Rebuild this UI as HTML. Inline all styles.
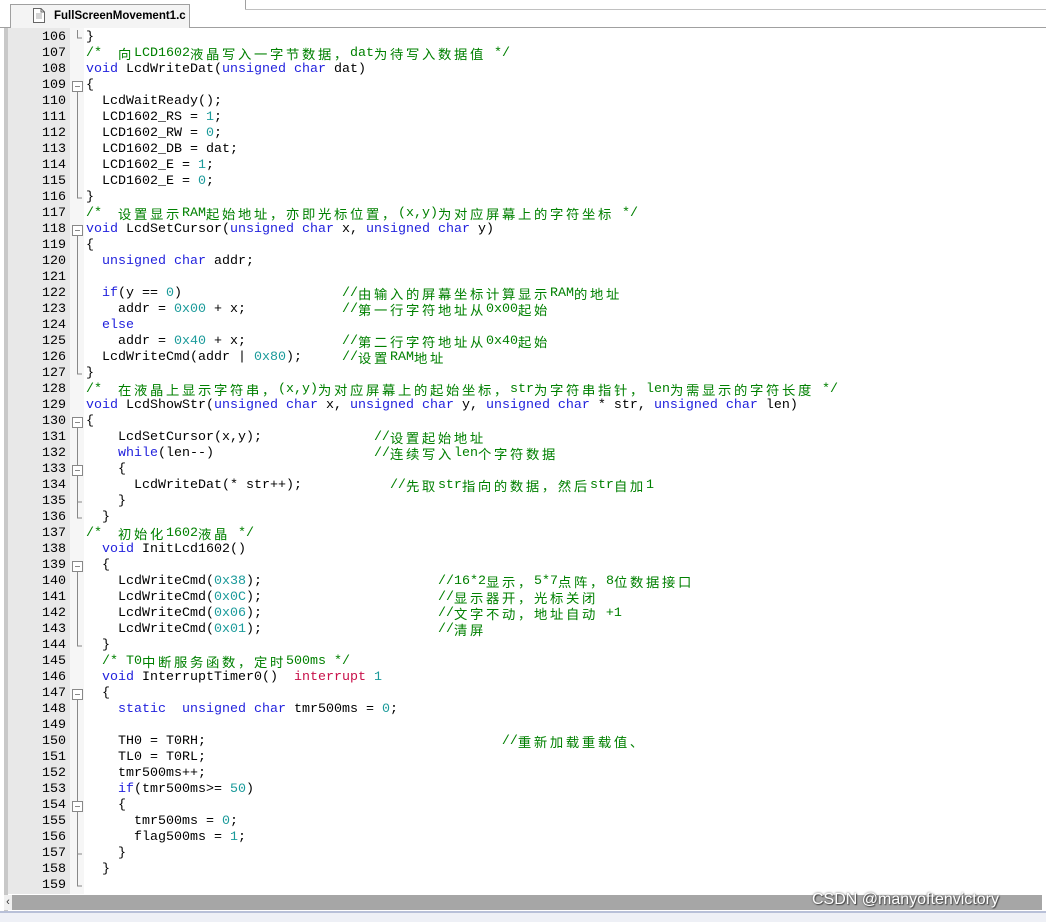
<!DOCTYPE html>
<html><head><meta charset="utf-8"><style>
body{margin:0;width:1046px;height:920px;background:#fff;position:relative;overflow:hidden;font-family:"Liberation Mono","Noto Sans CJK SC",monospace}
#top{position:absolute;left:0;top:0;width:1046px;height:27px;background:#fff;border-bottom:1px solid #a0a0a0}
#tab{position:absolute;left:10px;top:4px;width:178px;height:23px;background:#f4f4f4;border:1px solid #a0a0a0;border-bottom:none;font:bold 11.5px "Liberation Sans",sans-serif;white-space:nowrap;overflow:hidden}
#tab span{position:absolute;left:43px;top:5px}
#frame{position:absolute;left:4px;top:28px;width:1042px;height:886px;border-left:4px solid #c8c8c8;box-sizing:border-box}
#gut{position:absolute;left:8px;top:28px;width:62px;height:866px;background:#e8e8e8}
#fold{position:absolute;left:70px;top:28px;width:14px;height:866px;background:#f6f6f6}
#nums{position:absolute;left:8px;top:30px;width:58px;text-align:right;font-size:13.33px;line-height:16px;color:#000;white-space:pre}
#code{position:absolute;left:86px;top:30px;font-size:13.33px;line-height:16px;color:#000;white-space:pre}
#code div{height:16px;overflow:visible}
.k{color:#2222dd}.n{color:#1a9a9a}.m{color:#008000}.r{color:#c8104a}
i{font-style:normal;letter-spacing:2.67px;font-family:"Noto Sans CJK SC",sans-serif;display:inline-block;height:16px;line-height:16px;vertical-align:top;overflow:visible}
#sb{position:absolute;left:12px;top:895px;width:1030px;height:15px;background:#a6a6a6}
#sbl{position:absolute;left:4px;top:895px;width:8px;height:15px;background:#f0f0f0;font:11px sans-serif;color:#333;text-align:center;line-height:15px}
#bot{position:absolute;left:0;top:911px;width:1046px;height:9px;background:#eef0f6;border-top:2px solid #b8c0d8}
#wm{position:absolute;left:812px;top:891px;font:16px "Liberation Sans",sans-serif;color:#fff;text-shadow:0 0 2px #555,1px 1px 1px #444}
</style></head><body>
<div id="top"><div style="position:absolute;left:245px;top:0;width:1px;height:10px;background:#a0a0a0"></div><div style="position:absolute;left:245px;top:9px;width:801px;height:1px;background:#c0c0c0"></div></div>
<div id="tab"><svg style="position:absolute;left:22px;top:3px" width="12" height="15"><path d="M0.5 0.5H8L11.5 4V14.5H0.5Z" fill="#fff" stroke="#666"/><path d="M8 0.5V4H11.5" fill="none" stroke="#666"/><path d="M3 6h6M3 8h6M3 10h6" stroke="#aaa"/></svg><span>FullScreenMovement1.c</span></div>
<div id="frame"></div>
<div id="gut"></div><div id="fold"></div>
<svg style="position:absolute;left:70px;top:30px" width="14" height="864">
<g stroke="#888" fill="none" stroke-width="1">
<path d="M7.5 0V8H12"/>
<rect x="2.5" y="51.5" width="10" height="10" fill="#fff"/><path d="M5 56.5h5"/><path d="M7.5 62V168H12"/>
<rect x="2.5" y="195.5" width="10" height="10" fill="#fff"/><path d="M5 200.5h5"/><path d="M7.5 206V344H12"/>
<rect x="2.5" y="387.5" width="10" height="10" fill="#fff"/><path d="M5 392.5h5"/><path d="M7.5 398V488H12"/>
<rect x="2.5" y="435.5" width="10" height="10" fill="#fff"/><path d="M5 440.5h5"/><path d="M7.5 472H12"/>
<rect x="2.5" y="531.5" width="10" height="10" fill="#fff"/><path d="M5 536.5h5"/><path d="M7.5 542V616H12"/>
<rect x="2.5" y="659.5" width="10" height="10" fill="#fff"/><path d="M5 664.5h5"/><path d="M7.5 670V856H12"/>
<rect x="2.5" y="771.5" width="10" height="10" fill="#fff"/><path d="M5 776.5h5"/><path d="M7.5 824H12"/>
</g></svg>
<div id="nums">106
107
108
109
110
111
112
113
114
115
116
117
118
119
120
121
122
123
124
125
126
127
128
129
130
131
132
133
134
135
136
137
138
139
140
141
142
143
144
145
146
147
148
149
150
151
152
153
154
155
156
157
158
159</div>
<div id="code"><div>}</div><div><span class="m">/*  <i>向</i>LCD1602<i>液晶写入一字节数据，</i>dat<i>为待写入数据值</i> */</span></div><div><span class="k">void</span> LcdWriteDat(<span class="k">unsigned char</span> dat)</div><div>{</div><div>  LcdWaitReady();</div><div>  LCD1602_RS = <span class="n">1</span>;</div><div>  LCD1602_RW = <span class="n">0</span>;</div><div>  LCD1602_DB = dat;</div><div>  LCD1602_E = <span class="n">1</span>;</div><div>  LCD1602_E = <span class="n">0</span>;</div><div>}</div><div><span class="m">/*  <i>设置显示</i>RAM<i>起始地址，亦即光标位置，</i>(x,y)<i>为对应屏幕上的字符坐标</i> */</span></div><div><span class="k">void</span> LcdSetCursor(<span class="k">unsigned char</span> x, <span class="k">unsigned char</span> y)</div><div>{</div><div>  <span class="k">unsigned char</span> addr;</div><div> </div><div>  <span class="k">if</span>(y == <span class="n">0</span>)                    <span class="m">//<i>由输入的屏幕坐标计算显示</i>RAM<i>的地址</i></span></div><div>    addr = <span class="n">0x00</span> + x;            <span class="m">//<i>第一行字符地址从</i>0x00<i>起始</i></span></div><div>  <span class="k">else</span></div><div>    addr = <span class="n">0x40</span> + x;            <span class="m">//<i>第二行字符地址从</i>0x40<i>起始</i></span></div><div>  LcdWriteCmd(addr | <span class="n">0x80</span>);     <span class="m">//<i>设置</i>RAM<i>地址</i></span></div><div>}</div><div><span class="m">/*  <i>在液晶上显示字符串，</i>(x,y)<i>为对应屏幕上的起始坐标，</i>str<i>为字符串指针，</i>len<i>为需显示的字符长度</i> */</span></div><div><span class="k">void</span> LcdShowStr(<span class="k">unsigned char</span> x, <span class="k">unsigned char</span> y, <span class="k">unsigned char</span> * str, <span class="k">unsigned char</span> len)</div><div>{</div><div>    LcdSetCursor(x,y);              <span class="m">//<i>设置起始地址</i></span></div><div>    <span class="k">while</span>(len--)                    <span class="m">//<i>连续写入</i>len<i>个字符数据</i></span></div><div>    {</div><div>      LcdWriteDat(* str++);           <span class="m">//<i>先取</i>str<i>指向的数据，然后</i>str<i>自加</i>1</span></div><div>    }</div><div>  }</div><div><span class="m">/*  <i>初始化</i>1602<i>液晶</i> */</span></div><div>  <span class="k">void</span> InitLcd1602()</div><div>  {</div><div>    LcdWriteCmd(<span class="n">0x38</span>);                      <span class="m">//16*2<i>显示，</i>5*7<i>点阵，</i>8<i>位数据接口</i></span></div><div>    LcdWriteCmd(<span class="n">0x0C</span>);                      <span class="m">//<i>显示器开，光标关闭</i></span></div><div>    LcdWriteCmd(<span class="n">0x06</span>);                      <span class="m">//<i>文字不动，地址自动</i> +1</span></div><div>    LcdWriteCmd(<span class="n">0x01</span>);                      <span class="m">//<i>清屏</i></span></div><div>  }</div><div>  <span class="m">/* T0<i>中断服务函数，定时</i>500ms */</span></div><div>  <span class="k">void</span> InterruptTimer0()  <span class="r">interrupt</span> <span class="n">1</span></div><div>  {</div><div>    <span class="k">static</span>  <span class="k">unsigned char</span> tmr500ms = <span class="n">0</span>;</div><div> </div><div>    TH0 = T0RH;                                     <span class="m">//<i>重新加载重载值、</i></span></div><div>    TL0 = T0RL;</div><div>    tmr500ms++;</div><div>    <span class="k">if</span>(tmr500ms&gt;= <span class="n">50</span>)</div><div>    {</div><div>      tmr500ms = <span class="n">0</span>;</div><div>      flag500ms = <span class="n">1</span>;</div><div>    }</div><div>  }</div><div> </div></div>
<div id="sbl">‹</div><div id="sb"></div>
<div id="wm">CSDN @manyoftenvictory</div>
<div id="bot"></div>
</body></html>
